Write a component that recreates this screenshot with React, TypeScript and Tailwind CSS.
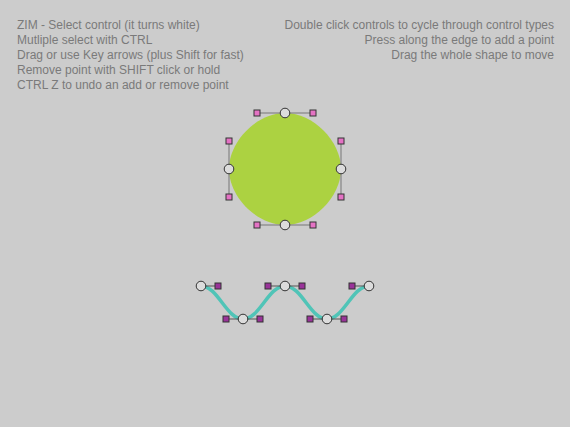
const leftLines = [
  "ZIM - Select control (it turns white)",
  "Mutliple select with CTRL",
  "Drag or use Key arrows (plus Shift for fast)",
  "Remove point with SHIFT click or hold",
  "CTRL Z to undo an add or remove point",
];

const rightLines = [
  "Double click controls to cycle through control types",
  "Press along the edge to add a point",
  "Drag the whole shape to move",
];

function Handle({ x, y, fill }: { x: number; y: number; fill: string }) {
  return (
    <rect x={x - 3} y={y - 3} width={6} height={6} fill={fill} stroke="#333" strokeWidth={1} />
  );
}

function Anchor({ x, y }: { x: number; y: number }) {
  return <circle cx={x} cy={y} r={4.8} fill="#dcdcdc" stroke="#333" strokeWidth={1} />;
}

export default function App() {
  // blob: anchors with handles 28px off
  const blob = [
    { x: 285, y: 113, h1: [257, 113], h2: [313, 113] },
    { x: 341, y: 169, h1: [341, 141], h2: [341, 197] },
    { x: 285, y: 225, h1: [313, 225], h2: [257, 225] },
    { x: 229, y: 169, h1: [229, 197], h2: [229, 141] },
  ];
  const blobPath =
    "M285 113 C313 113 341 141 341 169 C341 197 313 225 285 225 C257 225 229 197 229 169 C229 141 257 113 285 113 Z";

  const wave = [
    { x: 201, y: 286, hs: [[218, 286]] },
    { x: 243, y: 319, hs: [[226, 319], [260, 319]] },
    { x: 285, y: 286, hs: [[268, 286], [302, 286]] },
    { x: 327, y: 319, hs: [[310, 319], [344, 319]] },
    { x: 369, y: 286, hs: [[352, 286]] },
  ];
  const wavePath =
    "M201 286 C218 286 226 319 243 319 C260 319 268 286 285 286 C302 286 310 319 327 319 C344 319 352 286 369 286";

  return (
    <div className="w-[570px] h-[427px] bg-[#cccccc] overflow-hidden font-['Liberation_Sans',Arial,sans-serif]">
      {/* instructions */}
      <div className="h-[100px] flex justify-between pl-[17px] pr-[16px] pt-[18px] text-[12px] leading-[15px] text-[#7a7a7a]">
        <div className="flex flex-col">
          {leftLines.map((t) => (
            <span key={t}>{t}</span>
          ))}
        </div>
        <div className="flex flex-col items-end">
          {rightLines.map((t) => (
            <span key={t}>{t}</span>
          ))}
        </div>
      </div>

      {/* canvas */}
      <svg width={570} height={327} viewBox="0 100 570 327" className="block">
        <path d={blobPath} fill="#acd241" />
        {blob.map((p, i) => (
          <g key={i}>
            <line x1={p.h1[0]} y1={p.h1[1]} x2={p.h2[0]} y2={p.h2[1]} stroke="#777" strokeWidth={1} />
            <Handle x={p.h1[0]} y={p.h1[1]} fill="#e472c4" />
            <Handle x={p.h2[0]} y={p.h2[1]} fill="#e472c4" />
            <Anchor x={p.x} y={p.y} />
          </g>
        ))}

        <path d={wavePath} fill="none" stroke="#50c4b7" strokeWidth={3.5} />
        {wave.map((p, i) => (
          <g key={i}>
            {p.hs.map((h, j) => (
              <line key={j} x1={p.x} y1={p.y} x2={h[0]} y2={h[1]} stroke="#555" strokeWidth={1} />
            ))}
            {p.hs.map((h, j) => (
              <Handle key={"h" + j} x={h[0]} y={h[1]} fill="#993399" />
            ))}
            <Anchor x={p.x} y={p.y} />
          </g>
        ))}
      </svg>
    </div>
  );
}
